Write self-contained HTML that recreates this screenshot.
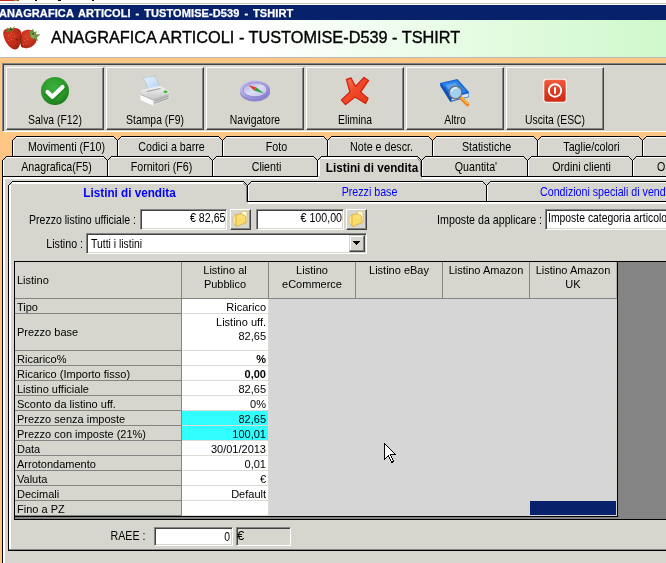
<!DOCTYPE html><html><head><meta charset="utf-8"><title>ANAGRAFICA ARTICOLI</title><style>
*{box-sizing:border-box;margin:0;padding:0}
html,body{width:666px;height:563px;overflow:hidden;background:#ffc684}
body{position:relative;font:13px "Liberation Sans",sans-serif;color:#000}
.a{position:absolute}
.ms,.msc,.msr{position:absolute;white-space:nowrap;font:13px/13px "Liberation Sans",sans-serif;height:13px;transform:scaleX(0.8)}
.ms{transform-origin:0 0}
.msc{text-align:center;transform-origin:50% 0}
.msr{text-align:right;transform-origin:100% 0}
.b{font-weight:bold;transform:scaleX(0.9)}
.t2{transform:scaleX(.82)}
.ar{position:absolute;white-space:nowrap;font:11px/13px "Liberation Sans",sans-serif}
.arr{position:absolute;white-space:nowrap;font:11px/13px "Liberation Sans",sans-serif;text-align:right;left:182px;width:84px}
.arc{position:absolute;font:11px/14px "Liberation Sans",sans-serif;text-align:center;top:263px;width:86px}
.btn{position:absolute;top:67px;width:98px;height:63px;background:#d6d6ce;border:1px solid;border-color:#fff #424242 #424242 #fff;box-shadow:inset -1px -1px 0 #848484}
.sunk{position:absolute;background:#fff;border:1px solid;border-color:#848484 #fff #fff #848484;box-shadow:inset 1px 1px 0 #424242,inset -1px -1px 0 #d6d6ce}
.fb{position:absolute;width:21px;height:21px;background:#d6d6ce;border:1px solid;border-color:#fff #424242 #424242 #fff;box-shadow:inset -1px -1px 0 #848484}
svg{position:absolute;left:0;top:0}
</style></head><body><div id="w" style="position:absolute;left:0;top:0;width:666px;height:563px;will-change:transform">
<div class="a" style="left:0;top:0;width:666px;height:5px;background:#fff"></div>
<div class="a" style="left:0;top:0;width:19px;height:1px;background:#c8301c"></div>
<div class="a" style="left:35px;top:0;width:2px;height:1px;background:#000"></div>
<div class="a" style="left:58px;top:0;width:3px;height:1px;background:#000"></div>
<div class="a" style="left:92px;top:0;width:2px;height:1px;background:#000"></div>
<div class="a" style="left:14px;top:0;width:3px;height:1px;background:#8a9a30"></div>
<div class="a" style="left:0;top:3px;width:666px;height:1px;background:#c9c7c0"></div>
<div class="a" style="left:0;top:5px;width:666px;height:15px;background:#08216b"></div>
<div class="a" style="left:-1px;top:7px;color:#fff;white-space:nowrap;font:bold 11px/13px 'Liberation Sans',sans-serif;letter-spacing:.1px;word-spacing:1.7px;-webkit-text-stroke:.25px #fff">ANAGRAFICA ARTICOLI - TUSTOMISE-D539 - TSHIRT</div>
<div class="a" style="left:0;top:20px;width:700px;height:37px;background:linear-gradient(90deg,#fff 0,#fff 250px,#cbf8c7 700px)"></div>
<div class="a" style="left:0;top:57px;width:666px;height:1px;background:#b8b8b8"></div>
<div class="a" style="left:51px;top:28px;white-space:nowrap;font:16.3px/19px 'Liberation Sans',sans-serif;-webkit-text-stroke:.35px #000">ANAGRAFICA ARTICOLI - TUSTOMISE-D539 - TSHIRT</div>
<div class="a" style="left:2px;top:63px;width:700px;height:69px;background:#d6d6ce;border:1px solid;border-color:#848484 #fff #fff #848484;box-shadow:inset 1px 1px 0 #424242"></div>
<div class="btn" style="left:6px"></div>
<div class="msc" style="left:6px;top:113px;width:98px">Salva (F12)</div>
<div class="btn" style="left:106px"></div>
<div class="msc" style="left:106px;top:113px;width:98px">Stampa (F9)</div>
<div class="btn" style="left:206px"></div>
<div class="msc" style="left:206px;top:113px;width:98px">Navigatore</div>
<div class="btn" style="left:306px"></div>
<div class="msc" style="left:306px;top:113px;width:98px">Elimina</div>
<div class="btn" style="left:406px"></div>
<div class="msc" style="left:406px;top:113px;width:98px">Altro</div>
<div class="btn" style="left:506px"></div>
<div class="msc" style="left:506px;top:113px;width:98px">Uscita (ESC)</div>
<svg style="left:0;top:20px" width="44" height="37" viewBox="0 20 44 37">
<defs>
<radialGradient id="sb1" cx="38%" cy="35%" r="75%"><stop offset="0" stop-color="#d43c24"/><stop offset=".55" stop-color="#c02c1a"/><stop offset="1" stop-color="#9c2010"/></radialGradient>
<radialGradient id="sb2" cx="40%" cy="35%" r="75%"><stop offset="0" stop-color="#d84428"/><stop offset=".55" stop-color="#c4301c"/><stop offset="1" stop-color="#a42412"/></radialGradient>
</defs>
<path d="M3.2 33.500C3 29.500 7 27.800 11 29C14 27.300 20 27.800 21.200 32C22 36 21.500 43 18.500 47.500C17 49.800 14.500 50 12 48.500C7.500 46 3.500 39 3.200 33.500Z" fill="url(#sb1)"/>
<path d="M20.500 36C21 31.500 25 29.300 29.500 29.800C33.500 30.200 36.500 33 36.800 38C37 42.500 33.500 47 28 48C25 48.500 22.500 48 21.500 46.500C20.500 43 20.200 39 20.500 36Z" fill="url(#sb2)"/>
<path d="M20.800 35.500C19.800 39 20 44 21.500 47L23 47.600C21.300 44 21 39.500 21.600 35.500Z" fill="#7c1c0c"/>
<path d="M17 38l1.500 1.500l-1.500 1.500l-1.500-1.500z" fill="#8c2010"/>
<path d="M4.500 32L7 30.500L7.500 27.500L9.500 29.500L10.500 26.500L12 29L14.500 26L14 29.500L11 31.500L7.500 31.500Z" fill="#5a8a30"/>
<path d="M10 28.500l2 .5l-.5 1.500l-2-.5z" fill="#2c3a20"/>
<path d="M29 30.500L31.500 31L33 28.500L34 32L37 31.500L35.500 34.500L40.500 34L37 37.500L38 41L34.500 39L31 38.500L30 35Z" fill="#6c9440"/>
<path d="M31 36a2 2 0 1 0 4 0a2 2 0 1 0-4 0" fill="#94a45c"/>
<path d="M32.500 33l1.500 .5l-.5 1.500l-1.500-.5z" fill="#34401c"/>
<g fill="#e06840"><rect x="8" y="35" width="1" height="1"/><rect x="11" y="33" width="1" height="1"/><rect x="11" y="39" width="1" height="1"/><rect x="14" y="36" width="1" height="1"/><rect x="8" y="40" width="1" height="1"/><rect x="25" y="36" width="1" height="1"/><rect x="24" y="40" width="1" height="1"/><rect x="26" y="43" width="1" height="1"/><rect x="23" y="44" width="1" height="1"/><rect x="27" y="39" width="1" height="1"/></g>
</svg>
<svg style="left:40px;top:76px" width="30" height="30" viewBox="40 76 30 30">
<defs><radialGradient id="gc" cx="45%" cy="35%" r="65%"><stop offset="0" stop-color="#3cb03c"/><stop offset=".7" stop-color="#2a962a"/><stop offset="1" stop-color="#1c7c1c"/></radialGradient></defs>
<circle cx="55" cy="91" r="14" fill="url(#gc)"/>
<path d="M46.500 92.500L52 98L63.500 87" fill="none" stroke="#1c7c1c" stroke-opacity=".5" stroke-width="5.500" stroke-linecap="round" stroke-linejoin="round" transform="translate(.5 .8)"/>
<path d="M47.500 92L52.300 96.800L62.500 87" fill="none" stroke="#fff" stroke-width="4.200" stroke-linecap="round" stroke-linejoin="round"/>
</svg>
<svg style="left:138px;top:74px" width="34" height="34" viewBox="138 74 34 34">
<defs><linearGradient id="pp" x1="0" y1="0" x2="1" y2="1"><stop offset="0" stop-color="#e8f2fc"/><stop offset="1" stop-color="#b4d0f0"/></linearGradient>
<linearGradient id="pb" x1="0" y1="0" x2="0" y2="1"><stop offset="0" stop-color="#f4f4f4"/><stop offset="1" stop-color="#c4c4c4"/></linearGradient></defs>
<path d="M143 78C148 77 152 76 155 76.500C157 80 159 84 160 87.500L148 90.500C147 85 145.500 81 143 78Z" fill="url(#pp)" stroke="#a8bcd4" stroke-width=".6"/>
<path d="M141 90L160 86L169.500 91L169.500 94L153 100L140.500 94.500Z" fill="url(#pb)"/>
<path d="M140.500 94.500L153 100L169.500 94L169.500 99L153 105.500L140.500 100Z" fill="#fbfbfb"/>
<path d="M153 100L169.500 94L169.500 99L153 105.500Z" fill="#d4d4d4"/>
<path d="M154.500 101L168.500 96M154.500 103L168.500 98" stroke="#8c8c8c" stroke-width=".8" fill="none"/>
<path d="M140.500 94.500L153 100L169.500 94" fill="none" stroke="#a0a0a0" stroke-width=".7"/>
<path d="M147 91.500L160.500 88.500" stroke="#9c9c9c" stroke-width="1.200" fill="none"/>
<ellipse cx="165.500" cy="91.700" rx="2" ry="1.200" fill="#38c038"/>
</svg>
<svg style="left:238px;top:78px" width="34" height="26" viewBox="238 78 34 26">
<defs><linearGradient id="cr" x1="0" y1="0" x2="1" y2="1"><stop offset="0" stop-color="#d0ccf4"/><stop offset="1" stop-color="#7c74c8"/></linearGradient>
<linearGradient id="cf" x1="0" y1="0" x2="1" y2="1"><stop offset="0" stop-color="#a8a4dc"/><stop offset=".5" stop-color="#dcdcf4"/><stop offset="1" stop-color="#c0bce8"/></linearGradient></defs>
<ellipse cx="255" cy="92" rx="15" ry="9.500" fill="#8c84d0"/>
<ellipse cx="255" cy="90" rx="15" ry="9.500" fill="url(#cr)"/>
<ellipse cx="255" cy="89.800" rx="12" ry="7" fill="url(#cf)" stroke="#8880cc" stroke-width=".8"/>
<path d="M248.500 85L256.500 87.500L254 90.500Z" fill="#e83828"/>
<path d="M256.500 87.500L264 93.500L254 90.500Z" fill="#30a040"/>
</svg>
<svg style="left:338px;top:74px" width="34" height="34" viewBox="338 74 34 34">
<defs><linearGradient id="rx" x1="0" y1="0" x2="1" y2="1"><stop offset="0" stop-color="#ff7858"/><stop offset=".5" stop-color="#f04828"/><stop offset="1" stop-color="#e03818"/></linearGradient></defs>
<path d="M346.500 79.500L351 78L355.500 86.500L364 77.500L368.500 80.500L360.500 92L368 98.500L365.500 103.500L355 97L345.500 104.500L341.500 100L350 92Z" fill="url(#rx)" stroke="#d42814" stroke-width="1.400" stroke-linejoin="round"/>
</svg>
<svg style="left:438px;top:76px" width="34" height="32" viewBox="438 76 34 32">
<path d="M440 83L457.500 79L469 92L469 97L450.500 102L440.500 86Z" fill="#1c68d0"/>
<path d="M442.500 83.500L457 80.500L466.500 91.500L452 95.500Z" fill="#2c84e8"/>
<path d="M445.500 85L455.500 83L462 90.500L452.500 93Z" fill="#5ca4ec"/>
<path d="M452 97.500L468.500 93.500L468.500 96.500L451.500 100.500Z" fill="#e8e8e8"/>
<path d="M440 83L440.500 86L450.500 102L452 97Z" fill="#1450b0"/>
<path d="M461 98L467.500 104.500" stroke="#f08020" stroke-width="3.600" stroke-linecap="round"/>
<path d="M461.500 97.500L467.500 103.500" stroke="#f8c040" stroke-width="1.300" stroke-linecap="round"/>
<circle cx="455.500" cy="92.500" r="6.300" fill="#a4d0f0" stroke="#68707c" stroke-width="1.300"/>
<path d="M451.500 91a4.500 4.500 0 0 1 5-3" stroke="#e4f4ff" stroke-width="1.400" fill="none" stroke-linecap="round"/>
</svg>
<svg style="left:542px;top:77px" width="27" height="28" viewBox="542 77 27 28">
<defs><linearGradient id="pw" x1="0" y1="0" x2="0" y2="1"><stop offset="0" stop-color="#f05c40"/><stop offset=".5" stop-color="#dc3c24"/><stop offset="1" stop-color="#cc2c18"/></linearGradient></defs>
<rect x="543.300" y="78.800" width="23.400" height="23.900" rx="3" fill="#fbf8f6"/>
<rect x="544.300" y="79.800" width="21.400" height="21.900" rx="2.500" fill="url(#pw)"/>
<circle cx="555" cy="90.500" r="6.200" fill="none" stroke="#fff" stroke-width="1.900"/>
<path d="M555 87.300V93.700" stroke="#fff" stroke-width="2"/>
</svg>
<!--FOLDERS-->

<svg width="666" height="563" viewBox="0 0 666 563" shape-rendering="crispEdges"><rect x="12" y="136" width="664" height="20" fill="#d6d6ce"/>
<path d="M12 136h4l-4 4z" fill="#ffc684"/>
<path d="M12.5 140 V156" fill="none" stroke="#000"/>
<path d="M13.5 140 V156" fill="none" stroke="#fff"/>
<rect x="13" y="139" width="1" height="1"/>
<rect x="14" y="138" width="1" height="1"/>
<rect x="15" y="137" width="1" height="1"/>
<path d="M16 136.5 H114" fill="none" stroke="#000"/>
<path d="M16 137.5 H114" fill="none" stroke="#fff"/>
<path d="M114 136h7l-3.5 4z" fill="#ffc684"/>
<rect x="116" y="139" width="1" height="1"/>
<rect x="115" y="138" width="1" height="1"/>
<rect x="114" y="137" width="1" height="1"/>
<path d="M117.5 140 V156" fill="none" stroke="#000"/>
<path d="M118.5 140 V156" fill="none" stroke="#fff"/>
<rect x="118" y="139" width="1" height="1"/>
<rect x="119" y="138" width="1" height="1"/>
<rect x="120" y="137" width="1" height="1"/>
<path d="M121 136.5 H219" fill="none" stroke="#000"/>
<path d="M121 137.5 H219" fill="none" stroke="#fff"/>
<path d="M219 136h7l-3.5 4z" fill="#ffc684"/>
<rect x="221" y="139" width="1" height="1"/>
<rect x="220" y="138" width="1" height="1"/>
<rect x="219" y="137" width="1" height="1"/>
<path d="M222.5 140 V156" fill="none" stroke="#000"/>
<path d="M223.5 140 V156" fill="none" stroke="#fff"/>
<rect x="223" y="139" width="1" height="1"/>
<rect x="224" y="138" width="1" height="1"/>
<rect x="225" y="137" width="1" height="1"/>
<path d="M226 136.5 H324" fill="none" stroke="#000"/>
<path d="M226 137.5 H324" fill="none" stroke="#fff"/>
<path d="M324 136h7l-3.5 4z" fill="#ffc684"/>
<rect x="326" y="139" width="1" height="1"/>
<rect x="325" y="138" width="1" height="1"/>
<rect x="324" y="137" width="1" height="1"/>
<path d="M327.5 140 V156" fill="none" stroke="#000"/>
<path d="M328.5 140 V156" fill="none" stroke="#fff"/>
<rect x="328" y="139" width="1" height="1"/>
<rect x="329" y="138" width="1" height="1"/>
<rect x="330" y="137" width="1" height="1"/>
<path d="M331 136.5 H429" fill="none" stroke="#000"/>
<path d="M331 137.5 H429" fill="none" stroke="#fff"/>
<path d="M429 136h7l-3.5 4z" fill="#ffc684"/>
<rect x="431" y="139" width="1" height="1"/>
<rect x="430" y="138" width="1" height="1"/>
<rect x="429" y="137" width="1" height="1"/>
<path d="M432.5 140 V156" fill="none" stroke="#000"/>
<path d="M433.5 140 V156" fill="none" stroke="#fff"/>
<rect x="433" y="139" width="1" height="1"/>
<rect x="434" y="138" width="1" height="1"/>
<rect x="435" y="137" width="1" height="1"/>
<path d="M436 136.5 H534" fill="none" stroke="#000"/>
<path d="M436 137.5 H534" fill="none" stroke="#fff"/>
<path d="M534 136h7l-3.5 4z" fill="#ffc684"/>
<rect x="536" y="139" width="1" height="1"/>
<rect x="535" y="138" width="1" height="1"/>
<rect x="534" y="137" width="1" height="1"/>
<path d="M537.5 140 V156" fill="none" stroke="#000"/>
<path d="M538.5 140 V156" fill="none" stroke="#fff"/>
<rect x="538" y="139" width="1" height="1"/>
<rect x="539" y="138" width="1" height="1"/>
<rect x="540" y="137" width="1" height="1"/>
<path d="M541 136.5 H639" fill="none" stroke="#000"/>
<path d="M541 137.5 H639" fill="none" stroke="#fff"/>
<path d="M639 136h7l-3.5 4z" fill="#ffc684"/>
<rect x="641" y="139" width="1" height="1"/>
<rect x="640" y="138" width="1" height="1"/>
<rect x="639" y="137" width="1" height="1"/>
<path d="M642.5 140 V156" fill="none" stroke="#000"/>
<path d="M643.5 140 V156" fill="none" stroke="#fff"/>
<rect x="643" y="139" width="1" height="1"/>
<rect x="644" y="138" width="1" height="1"/>
<rect x="645" y="137" width="1" height="1"/>
<path d="M646 136.5 H683" fill="none" stroke="#000"/>
<path d="M646 137.5 H683" fill="none" stroke="#fff"/>
<rect x="2" y="156" width="674" height="20" fill="#d6d6ce"/>
<path d="M2.5 160 V176" fill="none" stroke="#000"/>
<path d="M3.5 160 V176" fill="none" stroke="#fff"/>
<rect x="3" y="159" width="1" height="1"/>
<rect x="4" y="158" width="1" height="1"/>
<rect x="5" y="157" width="1" height="1"/>
<path d="M6 156.5 H104" fill="none" stroke="#000"/>
<path d="M6 157.5 H104" fill="none" stroke="#fff"/>
<rect x="106" y="159" width="1" height="1"/>
<rect x="105" y="158" width="1" height="1"/>
<rect x="104" y="157" width="1" height="1"/>
<path d="M107.5 160 V176" fill="none" stroke="#000"/>
<path d="M108.5 160 V176" fill="none" stroke="#fff"/>
<rect x="108" y="159" width="1" height="1"/>
<rect x="109" y="158" width="1" height="1"/>
<rect x="110" y="157" width="1" height="1"/>
<path d="M111 156.5 H209" fill="none" stroke="#000"/>
<path d="M111 157.5 H209" fill="none" stroke="#fff"/>
<rect x="211" y="159" width="1" height="1"/>
<rect x="210" y="158" width="1" height="1"/>
<rect x="209" y="157" width="1" height="1"/>
<path d="M212.5 160 V176" fill="none" stroke="#000"/>
<path d="M213.5 160 V176" fill="none" stroke="#fff"/>
<rect x="213" y="159" width="1" height="1"/>
<rect x="214" y="158" width="1" height="1"/>
<rect x="215" y="157" width="1" height="1"/>
<path d="M216 156.5 H314" fill="none" stroke="#000"/>
<path d="M216 157.5 H314" fill="none" stroke="#fff"/>
<rect x="316" y="159" width="1" height="1"/>
<rect x="315" y="158" width="1" height="1"/>
<rect x="314" y="157" width="1" height="1"/>
<path d="M317.5 160 V177" fill="none" stroke="#000"/>
<path d="M318.5 160 V178" fill="none" stroke="#fff"/>
<path d="M319.5 160 V178" fill="none" stroke="#fff"/>
<rect x="318" y="159" width="1" height="1"/>
<rect x="319" y="158" width="1" height="1"/>
<rect x="320" y="157" width="1" height="1"/>
<path d="M321 156.5 H418" fill="none" stroke="#000"/>
<path d="M321 157.5 H418" fill="none" stroke="#fff"/>
<path d="M321 158.5 H418" fill="none" stroke="#fff"/>
<rect x="420" y="159" width="1" height="1"/>
<rect x="419" y="158" width="1" height="1"/>
<rect x="418" y="157" width="1" height="1"/>
<path d="M420.5 161 V177" fill="none" stroke="#848484"/>
<path d="M417.0 158.0 l3 3" fill="none" stroke="#848484"/>
<path d="M421.5 160 V177" fill="none" stroke="#000"/>
<path d="M422.5 160 V176" fill="none" stroke="#fff"/>
<rect x="422" y="159" width="1" height="1"/>
<rect x="423" y="158" width="1" height="1"/>
<rect x="424" y="157" width="1" height="1"/>
<path d="M425 156.5 H524" fill="none" stroke="#000"/>
<path d="M425 157.5 H524" fill="none" stroke="#fff"/>
<rect x="526" y="159" width="1" height="1"/>
<rect x="525" y="158" width="1" height="1"/>
<rect x="524" y="157" width="1" height="1"/>
<path d="M527.5 160 V176" fill="none" stroke="#000"/>
<path d="M528.5 160 V176" fill="none" stroke="#fff"/>
<rect x="528" y="159" width="1" height="1"/>
<rect x="529" y="158" width="1" height="1"/>
<rect x="530" y="157" width="1" height="1"/>
<path d="M531 156.5 H629" fill="none" stroke="#000"/>
<path d="M531 157.5 H629" fill="none" stroke="#fff"/>
<rect x="631" y="159" width="1" height="1"/>
<rect x="630" y="158" width="1" height="1"/>
<rect x="629" y="157" width="1" height="1"/>
<path d="M632.5 160 V176" fill="none" stroke="#000"/>
<path d="M633.5 160 V176" fill="none" stroke="#fff"/>
<rect x="633" y="159" width="1" height="1"/>
<rect x="634" y="158" width="1" height="1"/>
<rect x="635" y="157" width="1" height="1"/>
<path d="M636 156.5 H683" fill="none" stroke="#000"/>
<path d="M636 157.5 H683" fill="none" stroke="#fff"/>
<path d="M2 156h4l-4 4z" fill="#ffc684"/>
<rect x="2" y="176" width="700" height="400" fill="#d6d6ce"/>
<path d="M2.5 176 V563" fill="none" stroke="#000"/>
<path d="M3.5 177 V563" fill="none" stroke="#fff"/>
<path d="M4.5 177 V563" fill="none" stroke="#fff"/>
<path d="M2 176.5 H318" fill="none" stroke="#000"/>
<path d="M3 177.5 H319" fill="none" stroke="#fff"/>
<path d="M3 178.5 H319" fill="none" stroke="#fff"/>
<path d="M421 176.5 H700" fill="none" stroke="#000"/>
<path d="M422 177.5 H700" fill="none" stroke="#fff"/>
<path d="M422 178.5 H700" fill="none" stroke="#fff"/>
<rect x="8" y="181" width="668" height="20" fill="#d6d6ce"/>
<path d="M8.5 185 V202" fill="none" stroke="#000"/>
<path d="M9.5 185 V203" fill="none" stroke="#fff"/>
<path d="M10.5 185 V203" fill="none" stroke="#fff"/>
<rect x="9" y="184" width="1" height="1"/>
<rect x="10" y="183" width="1" height="1"/>
<rect x="11" y="182" width="1" height="1"/>
<path d="M12 181.5 H244" fill="none" stroke="#000"/>
<path d="M12 182.5 H244" fill="none" stroke="#fff"/>
<path d="M12 183.5 H244" fill="none" stroke="#fff"/>
<rect x="246" y="184" width="1" height="1"/>
<rect x="245" y="183" width="1" height="1"/>
<rect x="244" y="182" width="1" height="1"/>
<path d="M246.5 186 V202" fill="none" stroke="#848484"/>
<path d="M243.0 183.0 l3 3" fill="none" stroke="#848484"/>
<path d="M247.5 185 V202" fill="none" stroke="#000"/>
<path d="M248.5 185 V201" fill="none" stroke="#fff"/>
<rect x="248" y="184" width="1" height="1"/>
<rect x="249" y="183" width="1" height="1"/>
<rect x="250" y="182" width="1" height="1"/>
<path d="M251 181.5 H483" fill="none" stroke="#000"/>
<path d="M251 182.5 H483" fill="none" stroke="#fff"/>
<rect x="485" y="184" width="1" height="1"/>
<rect x="484" y="183" width="1" height="1"/>
<rect x="483" y="182" width="1" height="1"/>
<path d="M486.5 185 V201" fill="none" stroke="#000"/>
<path d="M487.5 185 V201" fill="none" stroke="#fff"/>
<rect x="487" y="184" width="1" height="1"/>
<rect x="488" y="183" width="1" height="1"/>
<rect x="489" y="182" width="1" height="1"/>
<path d="M490 181.5 H722" fill="none" stroke="#000"/>
<path d="M490 182.5 H722" fill="none" stroke="#fff"/>
<rect x="724" y="184" width="1" height="1"/>
<rect x="723" y="183" width="1" height="1"/>
<rect x="722" y="182" width="1" height="1"/>
<path d="M725.5 185 V201" fill="none" stroke="#000"/>
<path d="M726.5 185 V201" fill="none" stroke="#fff"/>
<rect x="726" y="184" width="1" height="1"/>
<rect x="727" y="183" width="1" height="1"/>
<rect x="728" y="182" width="1" height="1"/>
<path d="M729 181.5 H683" fill="none" stroke="#000"/>
<path d="M729 182.5 H683" fill="none" stroke="#fff"/>
<path d="M8.5 201 V551" fill="none" stroke="#000"/>
<path d="M9.5 201 V550" fill="none" stroke="#fff"/>
<path d="M10.5 201 V549" fill="none" stroke="#fff"/>
<path d="M247 201.5 H700" fill="none" stroke="#000"/>
<path d="M248 202.5 H700" fill="none" stroke="#fff"/>
<path d="M248 203.5 H700" fill="none" stroke="#fff"/>
<path d="M9 549.5 H700" fill="none" stroke="#848484"/>
<path d="M8 550.5 H700" fill="none" stroke="#000"/></svg>
<div class="msc t2" style="left:14px;top:140px;width:105px">Movimenti (F10)</div>
<div class="msc t2" style="left:119px;top:140px;width:105px">Codici a barre</div>
<div class="msc t2" style="left:224px;top:140px;width:105px">Foto</div>
<div class="msc t2" style="left:329px;top:140px;width:105px">Note e descr.</div>
<div class="msc t2" style="left:434px;top:140px;width:105px">Statistiche</div>
<div class="msc t2" style="left:539px;top:140px;width:105px">Taglie/colori</div>
<div class="msc t2" style="left:4px;top:160px;width:105px">Anagrafica(F5)</div>
<div class="msc t2" style="left:109px;top:160px;width:105px">Fornitori (F6)</div>
<div class="msc t2" style="left:214px;top:160px;width:105px">Clienti</div>
<div class="msc b" style="left:320px;top:161px;width:104px">Listini di vendita</div>
<div class="msc t2" style="left:423px;top:160px;width:106px">Quantita'</div>
<div class="msc t2" style="left:529px;top:160px;width:105px">Ordini clienti</div>
<div class="ms t2" style="left:657px;top:160px">Ordini fornitori</div>
<div class="msc b" style="left:10px;top:186px;width:239px;color:#0000ff">Listini di vendita</div>
<div class="msc t2" style="left:250px;top:185px;width:239px;color:#0000ff">Prezzi base</div>
<div class="msc t2" style="left:489px;top:185px;width:239px;color:#0000ff">Condizioni speciali di vendita</div>
<div class="msr" style="left:0;width:136px;top:213px;transform:scaleX(.81)">Prezzo listino ufficiale :</div>
<div class="sunk" style="left:140px;top:209px;width:87px;height:21px"></div>
<div class="msr" style="left:100px;width:125.500px;top:211px;transform:scaleX(.82)">€ 82,65</div>
<div class="fb" style="left:230px;top:209px"></div>
<svg style="left:232px;top:210px" width="17" height="18" viewBox="0 0 17 18"><path d="M9 3.500L10 1.200L15 1.200L15 12L13 13Z" fill="#fffbe0" stroke="#dcac38" stroke-width=".6" stroke-linejoin="round"/><path d="M1 7L4 4.500L4 16L1 12.500Z" fill="#fce8a0" stroke="#e0b040" stroke-width=".6"/><path d="M4 5L9 3.500L13.500 6L14 12.500L5 16.500L4 16Z" fill="#f8dc6c" stroke="#d49c28" stroke-width=".6" stroke-linejoin="round"/><path d="M5 6.500L9 5.500L12 7.500L10 8.500Z" fill="#fce07c"/></svg>
<div class="sunk" style="left:256px;top:209px;width:88px;height:21px"></div>
<div class="msr t2" style="left:200px;width:142px;top:211px">€ 100,00</div>
<div class="fb" style="left:346px;top:209px"></div>
<svg style="left:348px;top:210px" width="17" height="18" viewBox="0 0 17 18"><path d="M9 3.500L10 1.200L15 1.200L15 12L13 13Z" fill="#fffbe0" stroke="#dcac38" stroke-width=".6" stroke-linejoin="round"/><path d="M1 7L4 4.500L4 16L1 12.500Z" fill="#fce8a0" stroke="#e0b040" stroke-width=".6"/><path d="M4 5L9 3.500L13.500 6L14 12.500L5 16.500L4 16Z" fill="#f8dc6c" stroke="#d49c28" stroke-width=".6" stroke-linejoin="round"/><path d="M5 6.500L9 5.500L12 7.500L10 8.500Z" fill="#fce07c"/></svg>
<div class="msr t2" style="left:400px;width:142px;top:213px">Imposte da applicare :</div>
<div class="sunk" style="left:545px;top:209px;width:160px;height:21px"></div>
<div class="ms" style="left:548px;top:211px">Imposte categoria articolo</div>
<div class="msr t2" style="left:0;width:83px;top:237px">Listino :</div>
<div class="sunk" style="left:86px;top:233px;width:281px;height:21px"></div>
<div class="ms" style="left:91px;top:237px">Tutti i listini</div>
<div class="a" style="left:349px;top:235px;width:16px;height:17px;background:#d6d6ce;border:1px solid;border-color:#d6d6ce #424242 #424242 #d6d6ce;box-shadow:inset -1px -1px 0 #848484,inset 1px 1px 0 #fff"></div>
<svg style="left:353px;top:241px" width="7" height="4" viewBox="0 0 7 4" shape-rendering="crispEdges"><path d="M0 0h7l-3.5 4z" fill="#000"/></svg>
<div class="a" style="left:14px;top:261px;width:700px;height:259px;background:#848484;border:1px solid #000"></div>
<div class="a" style="left:15px;top:262px;width:602px;height:254px;background:#d6d6ce"></div>
<div class="a" style="left:617px;top:262px;width:1px;height:255px;background:#000"></div>
<div class="a" style="left:15px;top:516px;width:603px;height:1px;background:#000"></div>
<div class="a" style="left:182px;top:299px;width:86px;height:216px;background:#fff"></div>
<div class="a" style="left:269px;top:299px;width:347px;height:216px;background:#d6d6d6"></div>
<div class="a" style="left:182px;top:411px;width:86px;height:14px;background:#31ffff"></div>
<div class="a" style="left:182px;top:426px;width:86px;height:14px;background:#31ffff"></div>
<div class="a" style="left:530px;top:501px;width:86px;height:14px;background:#08216b"></div>
<div class="a" style="left:15px;top:298px;width:167px;height:1px;background:#848484"></div>
<div class="a" style="left:15px;top:313px;width:167px;height:1px;background:#848484"></div>
<div class="a" style="left:182px;top:313px;width:86px;height:1px;background:#dcdcd4"></div>
<div class="a" style="left:269px;top:313px;width:347px;height:1px;background:#d5d5d1"></div>
<div class="a" style="left:15px;top:350px;width:167px;height:1px;background:#848484"></div>
<div class="a" style="left:182px;top:350px;width:86px;height:1px;background:#dcdcd4"></div>
<div class="a" style="left:269px;top:350px;width:347px;height:1px;background:#d5d5d1"></div>
<div class="a" style="left:15px;top:365px;width:167px;height:1px;background:#848484"></div>
<div class="a" style="left:182px;top:365px;width:86px;height:1px;background:#dcdcd4"></div>
<div class="a" style="left:269px;top:365px;width:347px;height:1px;background:#d5d5d1"></div>
<div class="a" style="left:15px;top:380px;width:167px;height:1px;background:#848484"></div>
<div class="a" style="left:182px;top:380px;width:86px;height:1px;background:#dcdcd4"></div>
<div class="a" style="left:269px;top:380px;width:347px;height:1px;background:#d5d5d1"></div>
<div class="a" style="left:15px;top:395px;width:167px;height:1px;background:#848484"></div>
<div class="a" style="left:182px;top:395px;width:86px;height:1px;background:#dcdcd4"></div>
<div class="a" style="left:269px;top:395px;width:347px;height:1px;background:#d5d5d1"></div>
<div class="a" style="left:15px;top:410px;width:167px;height:1px;background:#848484"></div>
<div class="a" style="left:182px;top:410px;width:86px;height:1px;background:#dcdcd4"></div>
<div class="a" style="left:269px;top:410px;width:347px;height:1px;background:#d5d5d1"></div>
<div class="a" style="left:15px;top:425px;width:167px;height:1px;background:#848484"></div>
<div class="a" style="left:182px;top:425px;width:86px;height:1px;background:#dcdcd4"></div>
<div class="a" style="left:269px;top:425px;width:347px;height:1px;background:#d5d5d1"></div>
<div class="a" style="left:15px;top:440px;width:167px;height:1px;background:#848484"></div>
<div class="a" style="left:182px;top:440px;width:86px;height:1px;background:#dcdcd4"></div>
<div class="a" style="left:269px;top:440px;width:347px;height:1px;background:#d5d5d1"></div>
<div class="a" style="left:15px;top:455px;width:167px;height:1px;background:#848484"></div>
<div class="a" style="left:182px;top:455px;width:86px;height:1px;background:#dcdcd4"></div>
<div class="a" style="left:269px;top:455px;width:347px;height:1px;background:#d5d5d1"></div>
<div class="a" style="left:15px;top:470px;width:167px;height:1px;background:#848484"></div>
<div class="a" style="left:182px;top:470px;width:86px;height:1px;background:#dcdcd4"></div>
<div class="a" style="left:269px;top:470px;width:347px;height:1px;background:#d5d5d1"></div>
<div class="a" style="left:15px;top:485px;width:167px;height:1px;background:#848484"></div>
<div class="a" style="left:182px;top:485px;width:86px;height:1px;background:#dcdcd4"></div>
<div class="a" style="left:269px;top:485px;width:347px;height:1px;background:#d5d5d1"></div>
<div class="a" style="left:15px;top:500px;width:167px;height:1px;background:#848484"></div>
<div class="a" style="left:182px;top:500px;width:86px;height:1px;background:#dcdcd4"></div>
<div class="a" style="left:269px;top:500px;width:347px;height:1px;background:#d5d5d1"></div>
<div class="a" style="left:15px;top:515px;width:167px;height:1px;background:#848484"></div>
<div class="a" style="left:182px;top:515px;width:86px;height:1px;background:#dcdcd4"></div>
<div class="a" style="left:269px;top:515px;width:347px;height:1px;background:#d5d5d1"></div>
<div class="a" style="left:182px;top:298px;width:435px;height:1px;background:#848484"></div>
<div class="a" style="left:181px;top:262px;width:1px;height:254px;background:#848484"></div>
<div class="a" style="left:268px;top:262px;width:1px;height:36px;background:#848484"></div>
<div class="a" style="left:355px;top:262px;width:1px;height:36px;background:#848484"></div>
<div class="a" style="left:442px;top:262px;width:1px;height:36px;background:#848484"></div>
<div class="a" style="left:529px;top:262px;width:1px;height:36px;background:#848484"></div>
<div class="a" style="left:616px;top:262px;width:1px;height:36px;background:#b0b0a8"></div>
<div class="a" style="left:268px;top:299px;width:1px;height:216px;background:#dcdcd4"></div>
<div class="ar" style="left:17px;top:274px">Listino</div>
<div class="arc" style="left:182px">Listino al<br>Pubblico</div>
<div class="arc" style="left:269px">Listino<br>eCommerce</div>
<div class="arc" style="left:356px">Listino eBay</div>
<div class="arc" style="left:443px">Listino Amazon</div>
<div class="arc" style="left:530px">Listino Amazon<br>UK</div>
<div class="ar" style="left:17px;top:301px">Tipo</div>
<div class="arr" style="top:301px">Ricarico</div>
<div class="ar" style="left:17px;top:326px">Prezzo base</div>
<div class="ar" style="left:17px;top:353px">Ricarico%</div>
<div class="arr" style="top:353px"><b>%</b></div>
<div class="ar" style="left:17px;top:368px">Ricarico (Importo fisso)</div>
<div class="arr" style="top:368px"><b>0,00</b></div>
<div class="ar" style="left:17px;top:383px">Listino ufficiale</div>
<div class="arr" style="top:383px">82,65</div>
<div class="ar" style="left:17px;top:398px">Sconto da listino uff.</div>
<div class="arr" style="top:398px">0%</div>
<div class="ar" style="left:17px;top:413px">Prezzo senza imposte</div>
<div class="arr" style="top:413px">82,65</div>
<div class="ar" style="left:17px;top:428px">Prezzo con imposte (21%)</div>
<div class="arr" style="top:428px">100,01</div>
<div class="ar" style="left:17px;top:443px">Data</div>
<div class="arr" style="top:443px">30/01/2013</div>
<div class="ar" style="left:17px;top:458px">Arrotondamento</div>
<div class="arr" style="top:458px">0,01</div>
<div class="ar" style="left:17px;top:473px">Valuta</div>
<div class="arr" style="top:473px">€</div>
<div class="ar" style="left:17px;top:488px">Decimali</div>
<div class="arr" style="top:488px">Default</div>
<div class="ar" style="left:17px;top:503px">Fino a PZ</div>
<div class="arr" style="top:315px;line-height:14px">Listino uff.<br>82,65</div>
<div class="msr t2" style="left:0;width:145.500px;top:529px">RAEE :</div>
<div class="sunk" style="left:154px;top:527px;width:79px;height:19px"></div>
<div class="msr" style="left:100px;width:130px;top:530px">0</div>
<div class="sunk" style="left:236px;top:527px;width:55px;height:19px;background:#d6d6ce"></div>
<div class="ms" style="left:237px;top:529px;transform:none">€</div>
<svg style="left:383px;top:442px" width="14" height="23" viewBox="0 0 14 23" shape-rendering="crispEdges"><path d="M1.5 1.5V17.5L5.5 13.5L8.5 20.5L10.5 19.5L7.5 12.5H12.5Z" fill="#fff" stroke="#000"/></svg></div></body></html>
